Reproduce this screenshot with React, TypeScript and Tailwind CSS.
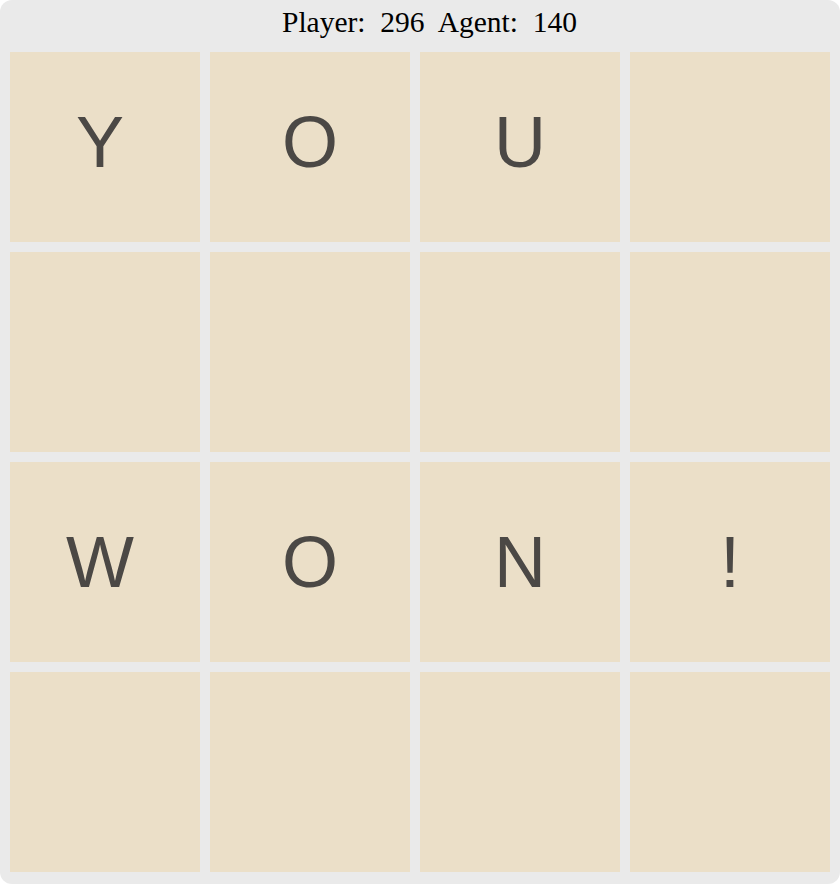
const board: string[] = [
  "Y", "O", "U", "",
  "", "", "", "",
  "W", "O", "N", "!",
  "", "", "", "",
];

export default function App() {
  return (
    <div className="w-[840px] h-[884px] bg-white">
      <div className="w-[840px] h-[884px] rounded-[12px] bg-[#eaeaea] flex flex-col">
        {/* Score header */}
        <div className="h-[52px] flex justify-center pl-[19px] pt-[5px] font-['Liberation_Serif',serif] text-[29.5px] leading-[34px] text-black">
          <span>Player:&nbsp; 296&nbsp; Agent:&nbsp; 140</span>
        </div>

        <div className="ml-[10px] grid grid-cols-[190px_200px_200px_200px] grid-rows-[190px_200px_200px_200px] gap-[10px]">
          {board.map((ch, i) => (
            <div
              key={i}
              className={
                "flex items-center justify-center bg-[#ebdfc8] font-['Liberation_Sans',Arial,sans-serif] text-[72px] text-[#4b4845] " +
                (i % 4 === 0 ? "pr-[10px] " : "") +
                (i < 4 ? "pb-[10px]" : "")
              }
            >
              {ch}
            </div>
          ))}
        </div>
      </div>
    </div>
  );
}
